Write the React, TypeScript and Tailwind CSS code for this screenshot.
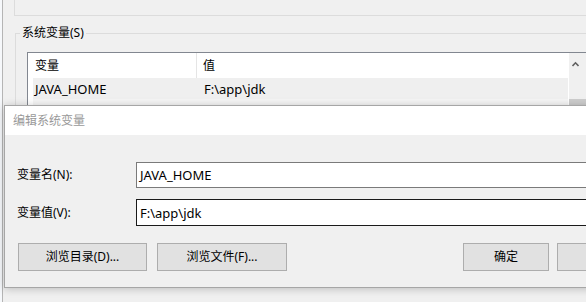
import React from "react";

const Button = ({label, className}: {label: string; className: string}) => (
  <div className={`h-[28px] shrink-0 flex items-center justify-center bg-[#e1e1e1] border border-[#adadad] ${className}`}>
    {label}
  </div>
);

const App = (): JSX.Element => {
  return (
    <div className="relative w-[586px] h-[302px] overflow-hidden bg-[#f0f0f0] text-[12px] leading-[16px] text-black font-['Noto_Sans','Noto_Sans_CJK_SC',sans-serif] flex">
      <div className="w-[3px] h-full bg-[#f6f8fb] border-r border-[#b5b5b5]" />

      <div className="flex-1 flex flex-col">
        <div className="ml-[11px] h-[16px] border-l border-b border-[#dcdcdc]" />

        {/* system variables group, clipped where the dialog covers it */}
        <div className="relative ml-[12px] mt-[17px] h-[72px] border-l border-t border-[#dcdcdc] flex flex-col">
          <div className="absolute left-[4px] top-[-9px] px-[2px] bg-[#f0f0f0]">系统变量(S)</div>

          <div className="ml-[11px] mt-[18px] h-[53px] overflow-hidden flex border-l border-t border-[#828790] bg-white">
            <div className="flex-1 flex flex-col">
              <div className="h-[25px] shrink-0 flex items-center">
                <div className="w-[169px] h-full pl-[7px] flex items-center border-r border-[#e5e5e5]">变量</div>
                <div className="pl-[6px]">值</div>
              </div>
              <div className="ml-[5px] h-[21px] shrink-0 flex items-center bg-[#efefef] text-[13px]">
                <div className="w-[164px] pl-[2px]">JAVA_HOME</div>
                <div className="pl-[7px]">F:\app\jdk</div>
              </div>
              <div className="ml-[5px] h-[21px] shrink-0 flex items-center bg-[#f5f5f5] text-[13px]">
                <div className="w-[164px] pl-[2px]">NUMBER_OF_PROCESSORS</div>
                <div className="pl-[7px]">4</div>
              </div>
            </div>
            <div className="w-[17px] shrink-0 ml-[1px] bg-[#f0f0f0] flex flex-col">
              <div className="h-[46px] shrink-0 flex items-start pl-[3px] pt-[8px]">
                <svg width="7" height="6" viewBox="0 0 7 6">
                  <path d="M0.5 5 L3.5 1.8 L6.5 5" fill="none" stroke="#606060" strokeWidth="1.6" />
                </svg>
              </div>
              <div className="h-[40px] shrink-0 bg-[#cdcdcd]" />
            </div>
          </div>
        </div>
      </div>

      {/* edit dialog */}
      <div className="absolute left-[4px] top-[105px] w-[640px] flex flex-col border border-[#a6a6a6] shadow-[0_1px_8px_rgba(0,0,0,0.22)]">
        <div className="h-[29px] bg-white flex items-center pl-[8px] text-[#999999]">编辑系统变量</div>

        <div className="bg-[#f0f0f0] pl-[12px] pt-[27px] pb-[16px] flex flex-col">
          <div className="flex items-center">
            <div className="w-[119px]">变量名(N):</div>
            <div className="flex-1 h-[26px] bg-white border border-[#7a7a7a] flex items-center pl-[3px] text-[13px]">JAVA_HOME</div>
          </div>

          <div className="flex items-center mt-[11px]">
            <div className="w-[119px]">变量值(V):</div>
            <div className="flex-1 h-[27px] bg-white border border-[#1a1a1a] flex items-center pl-[3px] text-[13px]">F:\app\jdk</div>
          </div>

          <div className="flex mt-[17px] ml-[1px]">
            <Button label="浏览目录(D)..." className="w-[129px]" />
            <Button label="浏览文件(F)..." className="w-[130px] ml-[10px]" />
            <Button label="确定" className="w-[86px] ml-[176px]" />
            <Button label="" className="w-[86px] ml-[8px]" />
          </div>
        </div>
      </div>
    </div>
  );
};

export default App;
